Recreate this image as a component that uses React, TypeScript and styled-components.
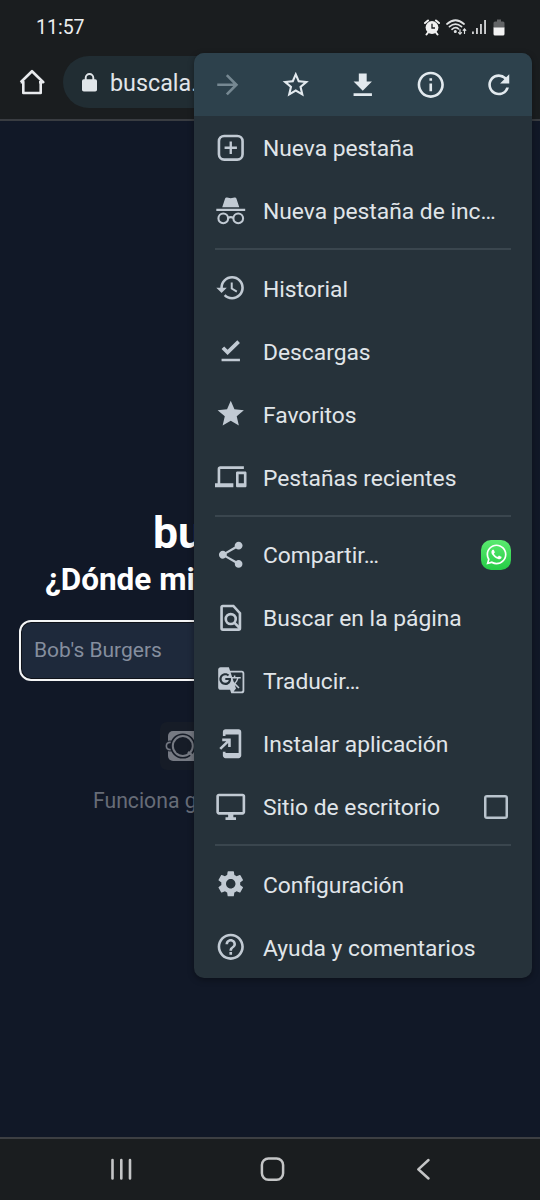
import React from 'react';
import styled, { createGlobalStyle } from 'styled-components';
import {
  MdArrowForward, MdStarBorder, MdInfoOutline, MdRefresh, MdHistory, MdStar,
  MdShare, MdGTranslate, MdSettings, MdHelpOutline, MdDevices,
} from 'react-icons/md';
import { FaWhatsapp } from 'react-icons/fa';

const Global = createGlobalStyle`
  * { box-sizing: border-box; }
  body { margin: 0; background: #111827; font-family: Roboto, "Liberation Sans", sans-serif; }
  svg { display: block; flex: none; }
`;

const Phone = styled.div`
  position: relative;
  display: flex;
  flex-direction: column;
  width: 540px;
  height: 1200px;
  overflow: hidden;
  background: #111827;
`;

const StatusBar = styled.header`
  display: flex;
  align-items: center;
  justify-content: space-between;
  height: 54px;
  padding: 0 35px 0 36px;
  background: #1a1d1f;
  color: #eceeef;
  font-size: 19.5px;
`;

const StatusIcons = styled.div`
  display: flex;
  align-items: center;
  gap: 5.7px;
`;

const AddressBar = styled.div`
  display: flex;
  align-items: flex-start;
  height: 67px;
  padding: 2px 100px 0 16px;
  background: #1a1d1f;
  border-bottom: 2px solid #393c41;
  color: #e8eaed;
`;

const HomeSlot = styled.span`
  padding-top: 10px;
`;

const UrlPill = styled.div`
  display: flex;
  align-items: center;
  gap: 13px;
  height: 52px;
  flex: 1;
  margin-left: 15px;
  padding: 1px 0 0 19px;
  border-radius: 26px;
  background: #212d33;
  color: #e1e6ea;
  font-size: 23.3px;
`;

const Page = styled.main`
  display: flex;
  flex-direction: column;
  align-items: flex-start;
  flex: 1;
  padding-top: 385px;
  color: #fff;
`;

const Title = styled.h1`
  margin: 0 0 0 153px;
  font-size: 44.5px;
  line-height: 54px;
  font-weight: 700;
`;

const Subtitle = styled.h2`
  margin: -1px 0 0 45px;
  font-size: 31.5px;
  line-height: 42px;
  font-weight: 700;
`;

const SearchBox = styled.div`
  align-self: stretch;
  display: flex;
  align-items: center;
  height: 61px;
  margin: 19px 19px 0;
  padding: 0 0 1px 13px;
  border: 2px solid #f4f5f6;
  border-radius: 12px;
  background: #1e293b;
  box-shadow: inset 0 0 0 1px #10131a;
  color: #858e9e;
  font-size: 21px;
`;

const Badge = styled.div`
  display: flex;
  align-items: center;
  width: 60px;
  height: 48px;
  margin: 41px 0 0 160px;
  padding-left: 4px;
  border-radius: 7px;
  background: #161c27;
`;

const Note = styled.p`
  margin: 17px 0 0 93px;
  font-size: 21.2px;
  line-height: 28px;
  color: #676c77;
`;

const NavBar = styled.nav`
  display: flex;
  align-items: center;
  justify-content: space-between;
  height: 63px;
  padding: 0 105px 1px 108px;
  background: #1a1d1f;
  border-top: 2px solid #3d3f43;
`;

const Menu = styled.aside`
  position: absolute;
  top: 53px;
  left: 194px;
  width: 338px;
  height: 925px;
  overflow: hidden;
  border-radius: 10px;
  background: #26323a;
  box-shadow: 0 2px 6px rgba(0, 0, 0, 0.35);
`;

const MenuActions = styled.div`
  display: flex;
  align-items: center;
  justify-content: space-between;
  height: 63px;
  padding: 1px 18px 0;
  background: #2d414c;
  color: #e2e9ee;
`;

const MenuAction = styled.span<{ $dim?: boolean }>`
  display: flex;
  color: ${(p) => (p.$dim ? '#768892' : 'inherit')};
`;

const MenuRow = styled.div`
  display: flex;
  align-items: center;
  height: 63px;
  padding: 0 21px;
  color: #c1cad3;
`;

const IconSlot = styled.span`
  display: flex;
  justify-content: center;
  width: 32px;
  margin-right: 16px;
`;

const Label = styled.span`
  flex: 1;
  padding-top: 2px;
  color: #e0e5e9;
  font-size: 22.8px;
  white-space: nowrap;
`;

const Divider = styled.hr`
  height: 2px;
  margin: 6px 21px 6.5px;
  border: 0;
  background: #3a464e;
`;

const WhatsAppTile = styled.span`
  display: flex;
  align-items: center;
  justify-content: center;
  width: 30px;
  height: 30px;
  border-radius: 10px;
  background: linear-gradient(#5bea70, #25cc45);
  color: #fff;
`;

const Checkbox = styled.span`
  width: 24px;
  height: 24px;
  margin-right: 3.5px;
  border: 2px solid #b9c4cd;
  border-radius: 3px;
  box-shadow: inset 0 0 0 0.5px #b9c4cd;
`;

type DrawingProps = { children: React.ReactNode; size?: number };

const Glyph = ({ children, size = 31.5 }: DrawingProps) => (
  <svg width={size} height={size} viewBox="0 0 24 24" fill="currentColor">{children}</svg>
);

const HomeIcon = () => (
  <svg width="32" height="32" viewBox="0 0 32 32" fill="none" stroke="currentColor" strokeWidth="2.6" strokeLinejoin="round">
    <path d="M7.300 15.7V27H24.700V15.7M4.7 16.2L16 5.200L27.3 16.2H23M4.7 16.2H8.5" />
  </svg>
);

const LockIcon = () => (
  <svg width="15" height="19" viewBox="0 0 15 19">
    <path d="M3.700 8V4.800a3.800 3.800 0 0 1 7.600 0V8" fill="none" stroke="currentColor" strokeWidth="1.900" />
    <rect x="0" y="6.300" width="15" height="12.200" rx="1.800" fill="currentColor" />
  </svg>
);

const NewTabIcon = () => (
  <Glyph>
    <rect x="3" y="3" width="18" height="18" rx="4" fill="none" stroke="currentColor" strokeWidth="2" />
    <path d="M11.100 7.300h1.800v3.800h3.800v1.800h-3.800v3.800h-1.800v-3.800H7.300v-1.800h3.800z" />
  </Glyph>
);

const IncognitoIcon = () => (
  <Glyph>
    <path d="M5.500 9.300L7.700 2.700Q8.100 1.600 9.200 1.900L12 2.500L14.800 1.900Q15.900 1.600 16.300 2.700L18.500 9.300zM1 10.500h22v1.700H1z" />
    <g fill="none" stroke="currentColor" strokeWidth="1.600">
      <circle cx="6.300" cy="17.800" r="3.700" />
      <circle cx="17.700" cy="17.800" r="3.700" />
      <path d="M10 17.500Q12 16.300 14 17.500" />
    </g>
  </Glyph>
);

const DoneIcon = () => (
  <Glyph>
    <path d="M5 18h14v2H5zM9.600 15.300L5 10.700l2-2l2.600 2.600L17 4l2 2z" />
  </Glyph>
);

const DownloadIcon = () => (
  <Glyph>
    <path d="M19 9.500h-4V3.500H9v6H5l7 7zM5 18.500v2h14v-2z" />
  </Glyph>
);

const FindIcon = () => (
  <Glyph>
    <g fill="none" stroke="currentColor" strokeWidth="2">
      <path d="M14 3H6Q5 3 5 4V20Q5 21 6 21H18Q19 21 19 20V8.500z" />
      <circle cx="12" cy="13" r="3.800" />
      <path d="M14.500 15.500L19 20" />
    </g>
  </Glyph>
);

const InstallIcon = () => (
  <Glyph>
    <path d="M18 1H8c-1.100 0-2 .9-2 2v3h2V5h10v14H8v-1H6v3c0 1.100.9 2 2 2h10c1.100 0 2-.9 2-2V3c0-1.100-.9-2-2-2z" />
    <path d="M5.500 8H12v6.500h-2v-3.100l-5.300 5.200-1.400-1.400L8.600 10H5.500z" />
  </Glyph>
);

const DesktopIcon = () => (
  <Glyph>
    <path d="M21 2H3c-1.100 0-2 .9-2 2v12c0 1.100.9 2 2 2h7v2H8v2h8v-2h-2v-2h7c1.100 0 2-.9 2-2V4c0-1.100-.9-2-2-2zm0 14H3V4h18v12z" />
  </Glyph>
);

const AlarmIcon = () => (
  <svg width="16" height="17" viewBox="0 0 16 17" fill="none">
    <circle cx="8" cy="8.500" r="6.400" fill="#f0f0f0" />
    <path d="M1 4L4 1.500M15 4L12 1.500M4 13.500L2.500 15.500M12 13.500L13.500 15.500" stroke="#f0f0f0" strokeWidth="2" strokeLinecap="round" />
    <path d="M8 4.800V9H11" stroke="#1a1d1f" strokeWidth="1.300" />
  </svg>
);

const WifiIcon = () => (
  <svg width="21" height="18" viewBox="0 0 21 18" fill="none" stroke="#dfe1e2" strokeWidth="1.700" strokeLinecap="round">
    <path d="M1 6Q9.500 -1.500 18 6M3.500 8.700Q9.500 3.500 15.500 8.700M6 11.300Q9.500 8.300 12.500 10.800" />
    <circle cx="9.300" cy="13.500" r="0.700" fill="#dfe1e2" />
    <path d="M14 11.500V16M12.500 14.700L14 16.200L15.500 14.700M18.500 15.500V11M17.200 12.300L18.500 10.900L19.800 12.300" strokeWidth="1.200" />
  </svg>
);

const SignalIcon = () => (
  <svg width="15" height="16" viewBox="0 0 15 16" fill="#e2e3e4">
    <path d="M.1 12.500h1.700V15H.1zM4.100 9h1.700v6H4.100zM8.100 5h1.700v10H8.100zM12.200 1h1.700v14h-1.700z" />
  </svg>
);

const BatteryIcon = () => (
  <svg width="12" height="17" viewBox="0 0 12 17">
    <path d="M4 0.500h4v2H10q1.500 0 1.500 1.500V9H.5V4Q.5 2.500 2 2.500H4z" fill="#626466" />
    <path d="M.5 8.500h11V15q0 1.500-1.500 1.500H2Q.5 16.500.5 15z" fill="#f2f2f2" />
  </svg>
);

const PodLogo = () => (
  <svg width="44" height="36" viewBox="0 0 44 36">
    <rect x="4" y="3" width="38" height="30" rx="5" fill="#767a83" />
    <circle cx="6" cy="18" r="5" fill="#767a83" stroke="#161c27" strokeWidth="1" />
    <circle cx="6" cy="18" r="2.800" fill="#161c27" />
    <circle cx="18.800" cy="18" r="11.800" fill="#767a83" stroke="#161c27" strokeWidth="1.600" />
    <circle cx="18.800" cy="18" r="9" fill="#161c27" />
    <path d="M24 24L28.500 27.500" fill="none" stroke="#767a83" strokeWidth="2.500" />
  </svg>
);

const RecentsIcon = () => (
  <svg width="26" height="26" viewBox="0 0 26 26" stroke="#c4c5c6" strokeWidth="2.600" strokeLinecap="round">
    <path d="M4.500 4V22.500M13.300 4V22.500M22 4V22.500" />
  </svg>
);

const HomeButtonIcon = () => (
  <svg width="26" height="26" viewBox="0 0 26 26">
    <rect x="2.900" y="2.500" width="21.200" height="21.200" rx="6.500" fill="none" stroke="#c4c5c6" strokeWidth="2.500" />
  </svg>
);

const BackIcon = () => (
  <svg width="26" height="26" viewBox="0 0 26 26" fill="none" stroke="#c4c5c6" strokeWidth="2.500" strokeLinecap="round" strokeLinejoin="round">
    <path d="M19.500 4L9.300 13.300L19.500 22.500" />
  </svg>
);

type Entry = { icon: React.ReactNode; label: string; end?: React.ReactNode };

const ICON = 31.5;

const groups: Entry[][] = [
  [
    { icon: <NewTabIcon />, label: 'Nueva pestaña' },
    { icon: <IncognitoIcon />, label: 'Nueva pestaña de inc…' },
  ],
  [
    { icon: <MdHistory size={ICON} />, label: 'Historial' },
    { icon: <DoneIcon />, label: 'Descargas' },
    { icon: <MdStar size={ICON} />, label: 'Favoritos' },
    { icon: <MdDevices size={ICON} />, label: 'Pestañas recientes' },
  ],
  [
    { icon: <MdShare size={ICON} />, label: 'Compartir…', end: <WhatsAppTile><FaWhatsapp size={23} /></WhatsAppTile> },
    { icon: <FindIcon />, label: 'Buscar en la página' },
    { icon: <MdGTranslate size={28.5} />, label: 'Traducir…' },
    { icon: <InstallIcon />, label: 'Instalar aplicación' },
    { icon: <DesktopIcon />, label: 'Sitio de escritorio', end: <Checkbox /> },
  ],
  [
    { icon: <MdSettings size={ICON} />, label: 'Configuración' },
    { icon: <MdHelpOutline size={ICON} />, label: 'Ayuda y comentarios' },
  ],
];

export default function App() {
  return (
    <Phone>
      <Global />
      <StatusBar>
        <span>11:57</span>
        <StatusIcons>
          <AlarmIcon />
          <WifiIcon />
          <SignalIcon />
          <BatteryIcon />
        </StatusIcons>
      </StatusBar>
      <AddressBar>
        <HomeSlot><HomeIcon /></HomeSlot>
        <UrlPill>
          <LockIcon />
          <span>buscala.</span>
        </UrlPill>
      </AddressBar>
      <Page>
        <Title>bus</Title>
        <Subtitle>¿Dónde mi</Subtitle>
        <SearchBox>Bob's Burgers</SearchBox>
        <Badge><PodLogo /></Badge>
        <Note>Funciona g</Note>
      </Page>
      <NavBar>
        <RecentsIcon />
        <HomeButtonIcon />
        <BackIcon />
      </NavBar>
      <Menu>
        <MenuActions>
          <MenuAction $dim><MdArrowForward size={ICON} /></MenuAction>
          <MenuAction><MdStarBorder size={ICON} /></MenuAction>
          <MenuAction><DownloadIcon /></MenuAction>
          <MenuAction><MdInfoOutline size={ICON} /></MenuAction>
          <MenuAction><MdRefresh size={ICON} /></MenuAction>
        </MenuActions>
        {groups.map((group, g) => (
          <React.Fragment key={g}>
            {g > 0 && <Divider />}
            {group.map((entry) => (
              <MenuRow key={entry.label}>
                <IconSlot>{entry.icon}</IconSlot>
                <Label>{entry.label}</Label>
                {entry.end}
              </MenuRow>
            ))}
          </React.Fragment>
        ))}
      </Menu>
    </Phone>
  );
}
